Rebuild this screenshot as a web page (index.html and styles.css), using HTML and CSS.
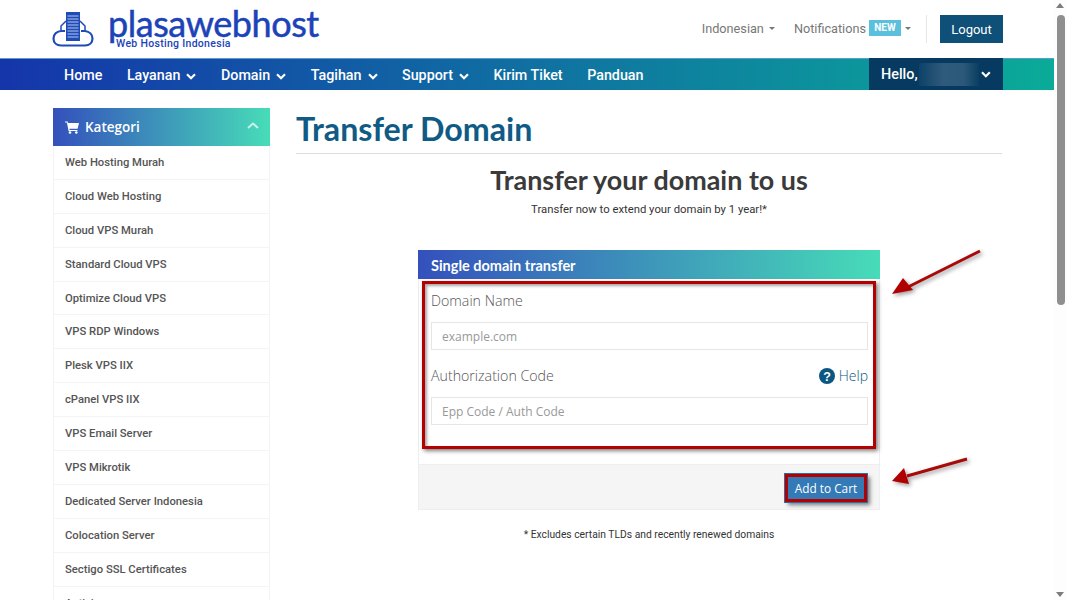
FILE: index.html
```html
<!DOCTYPE html>
<html lang="id">
	<head>
		<meta charset="utf-8" />
		<title>Transfer Domain - plasawebhost</title>
		<link rel="stylesheet" href="styles.css">
	</head>

	<body>
		<div class="page">
			<header class="topbar">
				<a class="logo" href="#">
					<svg class="logo-icon" width="42" height="36" viewBox="0 0 42 36">
						<path d="M13 20 H9.500 C4.500 20 1.500 23.500 1.500 27.500 C1.500 31.500 4.500 34.500 9 34.500 H33 C37.500 34.500 40.500 31.500 40.500 27.500 C40.500 23.500 37.500 20.500 33 20 H29" fill="none" stroke="#1f4bb8" stroke-width="2.200" />
						<rect x="14" y="1" width="14" height="29" fill="#1f4bb8" />
						<path d="M15.500 5 H26.500 M15.500 8 H26.500 M15.500 11 H26.500 M15.500 14 H26.500 M15.500 17 H26.500 M15.500 20 H26.500 M15.500 23 H26.500 M15.500 26 H26.500" stroke="#b9c9ee" stroke-width="1" />
						<path d="M9 20 V15 L14 10 M33 20 V15 L28 10" fill="none" stroke="#1f4bb8" stroke-width="1.500" />
					</svg>
					<span class="logo-text">
						<span class="logo-name">plasawebhost</span>
						<span class="logo-sub">Web Hosting Indonesia</span>
					</span>
				</a>
				<div class="top-links">
					<a href="#">Indonesian<i class="caret"></i></a>
					<a href="#">Notifications<span class="badge">NEW</span><i class="caret"></i></a>
					<span class="top-sep"></span>
					<a class="logout" href="#">Logout</a>
				</div>
			</header>

			<nav class="mainnav">
				<ul class="menu">
					<li>Home</li>
					<li>Layanan<svg class="chev" viewBox="0 0 10 7"><path d="M1 1.200 L5 5.200 L9 1.200" /></svg></li>
					<li>Domain<svg class="chev" viewBox="0 0 10 7"><path d="M1 1.200 L5 5.200 L9 1.200" /></svg></li>
					<li>Tagihan<svg class="chev" viewBox="0 0 10 7"><path d="M1 1.200 L5 5.200 L9 1.200" /></svg></li>
					<li>Support<svg class="chev" viewBox="0 0 10 7"><path d="M1 1.200 L5 5.200 L9 1.200" /></svg></li>
					<li>Kirim Tiket</li>
					<li>Panduan</li>
				</ul>
				<div class="hello">
					<span>Hello,</span>
					<span class="blurname"></span>
					<svg class="chev" viewBox="0 0 10 7"><path d="M1 1.200 L5 5.200 L9 1.200" /></svg>
				</div>
			</nav>

			<div class="content">
				<aside class="sidebar">
					<div class="side-head">
						<svg width="14" height="13" viewBox="0 0 14 13"><path d="M0 .500 H2.600 L3 2 H14 L12.600 7.800 H4.400 L4.700 9 H12.400 V10 H3.600 L1.900 1.500 H0 Z" fill="#fff" /><circle cx="5" cy="11.500" r="1.300" fill="#fff" /><circle cx="11.300" cy="11.500" r="1.300" fill="#fff" /></svg>
						<span>Kategori</span>
						<svg class="side-up" viewBox="0 0 12 7"><path d="M1 6 L6 1.500 L11 6" /></svg>
					</div>
					<ul class="side-list">
						<li>Web Hosting Murah</li>
						<li>Cloud Web Hosting</li>
						<li>Cloud VPS Murah</li>
						<li>Standard Cloud VPS</li>
						<li>Optimize Cloud VPS</li>
						<li>VPS RDP Windows</li>
						<li>Plesk VPS IIX</li>
						<li>cPanel VPS IIX</li>
						<li>VPS Email Server</li>
						<li>VPS Mikrotik</li>
						<li>Dedicated Server Indonesia</li>
						<li>Colocation Server</li>
						<li>Sectigo SSL Certificates</li>
						<li>Antivirus</li>
					</ul>
				</aside>

				<main class="main">
					<h1>Transfer Domain</h1>
					<h2>Transfer your domain to us</h2>
					<p class="lead">Transfer now to extend your domain by 1 year!*</p>

					<form class="card" onsubmit="return false">
						<div class="card-head">Single domain transfer</div>
						<div class="card-body">
							<label class="field-label">Domain Name</label>
							<input class="field" type="text" placeholder="example.com" />
							<div class="label-row">
								<label class="field-label">Authorization Code</label>
								<a class="help" href="#">
									<svg width="16" height="16" viewBox="0 0 14 14"><circle cx="7" cy="7" r="7" fill="#0b5781" /><text x="7" y="11" text-anchor="middle" class="help-mark">?</text></svg>
									Help
								</a>
							</div>
							<input class="field" type="text" placeholder="Epp Code / Auth Code" />
							<span class="mark mark-form"></span>
						</div>
						<div class="card-foot">
							<button class="add-btn" type="submit">Add to Cart</button>
						</div>
						<svg class="arrow arrow-form" width="100" height="60" viewBox="0 0 100 60">
							<path d="M92 4 L20 40" stroke="#a80a0a" stroke-width="3" />
							<path d="M4 47 L15 31 L25 43 Z" fill="#b00000" />
						</svg>
						<svg class="arrow arrow-btn" width="84" height="36" viewBox="0 0 84 36">
							<path d="M78 4 L18 21" stroke="#a80a0a" stroke-width="3" />
							<path d="M3 26 L15 13 L20 29 Z" fill="#b00000" />
						</svg>
					</form>

					<p class="note">* Excludes certain TLDs and recently renewed domains</p>
				</main>
			</div>

			<div class="scrollbar">
				<i class="sb-up"></i>
				<i class="sb-thumb"></i>
				<i class="sb-down"></i>
			</div>
		</div>
	</body>
</html>
```

FILE: styles.css
```css
html,
body {
	margin: 0;
	padding: 0;
	height: 100%;
	overflow: hidden;
	background: #fff;
}
body {
	font-family: "Roboto", "Liberation Sans", sans-serif;
	color: #333;
}
a {
	color: inherit;
	text-decoration: none;
}
ul {
	list-style: none;
	margin: 0;
	padding: 0;
}
.page {
	position: relative;
	width: 1067px;
	height: 600px;
	overflow: hidden;
	padding-right: 13px;
	box-sizing: border-box;
}

/* top */
.topbar {
	height: 58px;
	box-sizing: border-box;
	padding: 0 51px 0 52px;
	display: flex;
	align-items: center;
	justify-content: space-between;
}
.logo {
	display: flex;
	align-items: flex-start;
	height: 58px;
}
.logo-icon {
	margin-top: 11px;
}
.logo-text {
	display: flex;
	flex-direction: column;
	margin-left: 14px;
}
.logo-name {
	font-family: "Lato", sans-serif;
	font-size: 36px;
	line-height: 30px;
	margin-top: 8px;
	letter-spacing: -.45px;
	-webkit-text-stroke: .5px #1c43b8;
	color: #1c43b8;
}
.logo-sub {
	font-size: 10.500px;
	font-weight: 500;
	line-height: 12px;
	margin-left: 8px;
	letter-spacing: .3px;
	color: #1c43b8;
}
.top-links {
	display: flex;
	align-items: center;
	font-size: 12.700px;
	color: #777;
}
.top-links > a {
	display: flex;
	align-items: center;
	padding-bottom: 2px;
}
.top-links > a + a {
	margin-left: 19px;
}
.caret {
	display: inline-block;
	margin-left: 5px;
	border-top: 3px solid #777;
	border-left: 3.500px solid transparent;
	border-right: 3.500px solid transparent;
}
.badge {
	margin-left: 3px;
	width: 32px;
	height: 16px;
	text-align: center;
	background: #5bc0de;
	color: #fff;
	font-size: 10px;
	font-weight: 700;
	line-height: 16px;
}
.badge + .caret {
	margin-left: 4px;
}
.top-sep {
	width: 1px;
	height: 28px;
	margin: 0 13px 0 15px;
	background: #e6e6e6;
}
.top-links > .logout {
	margin-left: 0;
	padding-bottom: 0;
	width: 63px;
	height: 28px;
	justify-content: center;
	background: #0f5078;
	color: #fff;
	font-size: 13px;
}

/* nav */
.mainnav {
	height: 32px;
	display: flex;
	justify-content: space-between;
	padding-left: 52px;
	background: linear-gradient(90deg, #1535ab 0%, #0aab98 100%);
	color: #fff;
	border-top: 1px solid #5d9cc8;
	box-sizing: border-box;
	padding-right: 51px;
}
.menu {
	display: flex;
	align-items: center;
	padding-left: 12px;
	gap: 24.500px;
	font-size: 14.300px;
	font-weight: 500;
}
.chev {
	width: 10px;
	height: 7px;
	margin-left: 6px;
	fill: none;
	stroke: #fff;
	stroke-width: 2.200;
}
.hello {
	width: 134px;
	margin-top: -1px;
	height: 32px;
	box-sizing: border-box;
	padding: 0 12px;
	display: flex;
	align-items: center;
	background: #063a60;
	font-size: 14.400px;
	font-weight: 500;
}
.blurname {
	width: 62px;
	height: 23px;
	margin-left: 1px;
	background: linear-gradient(90deg, #0d4268, #2f5a7c 40%, #2b5878 75%, #0a3e62);
}
.hello .chev {
	margin-left: 2px;
}

/* layout */
.content {
	display: flex;
	padding: 18px 52px 0 53px;
	gap: 26px;
}
.sidebar {
	width: 217px;
	flex: none;
}
.side-head {
	height: 38px;
	box-sizing: border-box;
	padding: 0 12px;
	display: flex;
	align-items: center;
	gap: 6px;
	background: linear-gradient(90deg, #3450bc 0%, #47dcb8 100%);
	color: #fff;
	font-family: "Open Sans", sans-serif;
	font-size: 13.500px;
	font-weight: 600;
}
.side-up {
	width: 12px;
	height: 7px;
	margin-left: auto;
	margin-right: -1px;
	margin-bottom: 4px;
	fill: none;
	stroke: #fff;
	stroke-width: 2;
	opacity: .7;
}
.side-list {
	border-left: 1px solid #f4f4f4;
	border-right: 1px solid #f4f4f4;
}
.side-list li {
	height: 33.900px;
	box-sizing: border-box;
	padding: 0 11px;
	display: flex;
	align-items: center;
	border-bottom: 1px solid #f4f4f4;
	font-size: 11.250px;
	font-weight: 500;
	color: #555;
}
.main {
	flex: 1;
}
h1 {
	margin: 2px 0 0;
	padding-bottom: 5px;
	height: 38px;
	border-bottom: 1px solid #ddd;
	font-family: "Lato", sans-serif;
	font-size: 32.200px;
	line-height: 38px;
	font-weight: 700;
	color: #0f5b85;
}
h2 {
	margin: 9px 0 0;
	text-align: center;
	font-family: "Lato", sans-serif;
	font-size: 26.900px;
	line-height: 34px;
	font-weight: 700;
	color: #3a3a3a;
}
.lead {
	margin: 5px 0 0;
	text-align: center;
	font-size: 11.300px;
	line-height: 16px;
	color: #333;
}

/* card */
.card {
	position: relative;
	width: 462px;
	margin: 32px 0 0 122px;
}
.card-head {
	height: 29px;
	box-sizing: border-box;
	padding: 8px 13px 0;
	background: linear-gradient(90deg, #3450bc 0%, #47dcb8 100%);
	color: #fff;
	font-family: "Lato", sans-serif;
	font-size: 14.500px;
	line-height: 16px;
	font-weight: 700;
}
.card-body {
	position: relative;
	height: 185px;
	box-sizing: border-box;
	padding: 12px 11px 0 12px;
	border-left: 1px solid #eee;
	border-right: 1px solid #eee;
}
.field-label {
	display: block;
	font-family: "Open Sans", sans-serif;
	font-size: 14.200px;
	font-weight: 300;
	line-height: 20px;
	color: #555;
}
.field {
	display: block;
	width: 100%;
	height: 28px;
	margin-top: 11px;
	padding: 0 10px;
	box-sizing: border-box;
	border: 1px solid #e6e6e6;
	font-family: "Open Sans", sans-serif;
	font-size: 12px;
	outline: 0;
}
.field::placeholder {
	color: #999;
}
.label-row {
	display: flex;
	justify-content: space-between;
	align-items: center;
	margin-top: 16px;
}
.help {
	display: flex;
	align-items: center;
	gap: 4px;
	font-family: "Open Sans", sans-serif;
	font-size: 14px;
	font-weight: 300;
	line-height: 20px;
	color: #0b5781;
}
.help-mark {
	font-family: "Liberation Sans", sans-serif;
	font-size: 11px;
	font-weight: 700;
	fill: #fff;
}
.card-foot {
	height: 46px;
	box-sizing: border-box;
	padding: 9px 12px 0 0;
	display: flex;
	justify-content: flex-end;
	background: #f5f5f5;
	border: 1px solid #eee;
}
.add-btn {
	width: 82px;
	height: 28px;
	padding: 0;
	background: #337ab7;
	border: 3px solid #b30000;
	outline: 1px solid #2e6da4;
	box-shadow: 3px 3px 4px rgba(0, 0, 0, .5);
	color: #fff;
	font-family: "Open Sans", sans-serif;
	font-size: 11.800px;
	cursor: pointer;
}

/* markup drawn on the screenshot */
.mark {
	position: absolute;
	left: 3px;
	top: 2px;
	width: 454px;
	height: 168px;
	box-sizing: border-box;
	border: 3px solid #b30000;
	box-shadow: 2px 2px 4px rgba(0, 0, 0, .5), inset 2px 2px 3px rgba(0, 0, 0, .35);
}
.arrow {
	position: absolute;
	overflow: visible;
	filter: drop-shadow(2px 2px 2px rgba(0, 0, 0, .4));
}
.arrow-form {
	left: 470px;
	top: -3px;
}
.arrow-btn {
	left: 471px;
	top: 205px;
}
.note {
	margin: 17px 0 0;
	text-align: center;
	font-size: 10.300px;
	line-height: 16px;
	color: #333;
}

/* fake scrollbar */
.scrollbar {
	position: absolute;
	right: 0;
	top: 0;
	width: 13px;
	height: 600px;
	background: #fdfdfd;
}
.sb-up,
.sb-down {
	position: absolute;
	left: 2px;
	border-left: 4px solid transparent;
	border-right: 4px solid transparent;
}
.sb-up {
	top: 3px;
	border-bottom: 5px solid #7c7c7c;
}
.sb-down {
	bottom: 3px;
	border-top: 5px solid #7c7c7c;
}
.sb-thumb {
	position: absolute;
	left: 3px;
	top: 15px;
	width: 8px;
	height: 290px;
	border-radius: 4px;
	background: #8f8f8f;
}
```
